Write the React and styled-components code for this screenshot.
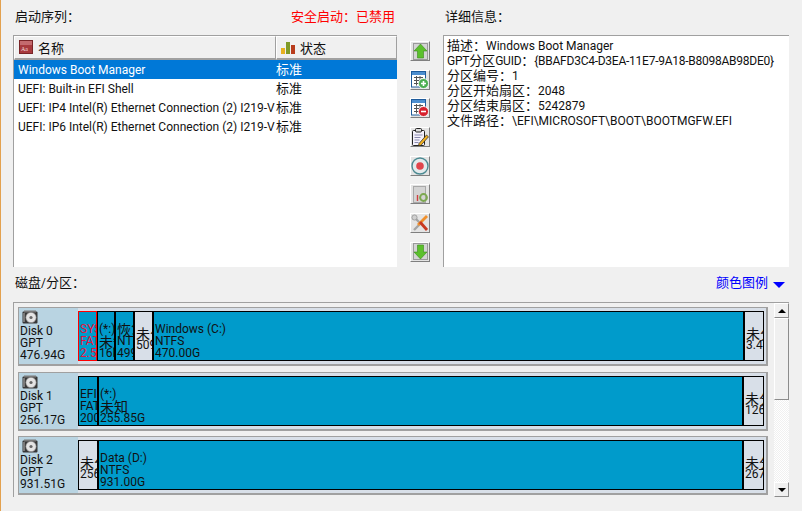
import React from 'react';
import styled, { createGlobalStyle } from 'styled-components';

const GlobalStyle = createGlobalStyle`
  html, body {
    margin: 0;
    padding: 0;
    background: #f0f0f0;
  }
  * {
    box-sizing: border-box;
  }
`;

const Page = styled.div`
  width: 802px;
  height: 511px;
  overflow: hidden;
  background: #f0f0f0;
  border-left: 1px solid #e3a14f;
  color: #111;
  font-family: Roboto, 'Noto Sans CJK SC', sans-serif;
  font-size: 12px;
  display: flex;
  flex-direction: column;
`;

const Cjk = styled.span`
  font-family: 'Noto Sans CJK SC', sans-serif;
  font-size: 13px;
  line-height: 1;
  letter-spacing: 0;
`;

const Top = styled.div`
  display: flex;
  height: 267px;
  padding: 9px 13px 0 12px;
`;

const LeftCol = styled.div`
  width: 384px;
  display: flex;
  flex-direction: column;
`;

const LabelRow = styled.div`
  height: 17px;
  margin-bottom: 9px;
  display: flex;
  justify-content: space-between;
  align-items: center;
  line-height: 17px;
  padding-left: 2px;
`;

const SecureText = styled.span`
  color: #f00;
  width: 106px;
  white-space: nowrap;
`;

const ListBox = styled.div`
  flex: 1;
  background: #fff;
  border-top: 1px solid #a0a0a0;
  border-left: 1px solid #a0a0a0;
`;

const HeaderRow = styled.div`
  display: flex;
  height: 24px;
`;

const HeaderCell = styled.div`
  width: ${(p) => p.$width}px;
  background: #f0f0f0;
  border-top: 1px solid #fff;
  border-left: 1px solid #fff;
  border-right: 1px solid #a0a0a0;
  border-bottom: 2px solid #a0a0a0;
  display: flex;
  align-items: center;
  gap: 5px;
  padding: 0 0 1px 4px;
  line-height: 19px;
`;

const Row = styled.div`
  height: 19px;
  line-height: 19px;
  padding-top: 1px;
  display: flex;
  align-items: center;
  background: ${(p) => (p.$selected ? '#0078d7' : '#fff')};
  color: ${(p) => (p.$selected ? '#fff' : '#111')};
`;

const NameCell = styled.div`
  width: 262px;
  padding-left: 4px;
  white-space: nowrap;
  overflow: hidden;
`;

const StateCell = styled.div`
  padding-left: 0;
`;

const Toolbar = styled.div`
  width: 46px;
  flex-shrink: 0;
  padding: 32px 0 0 13px;
  display: flex;
  flex-direction: column;
  gap: 8.7px;
`;

const ToolButton = styled.div`
  width: 20px;
  height: 20px;
  background: #e4e4e4;
  border-top: 1px solid #fff;
  border-left: 1px solid #fff;
  border-right: 1px solid #7f7f7f;
  border-bottom: 1px solid #7f7f7f;
  display: flex;
  align-items: center;
  justify-content: center;
`;

const RightCol = styled.div`
  flex: 1;
  display: flex;
  flex-direction: column;
`;

const DetailBox = styled.div`
  flex: 1;
  background: #fff;
  border-top: 1px solid #a0a0a0;
  border-left: 1px solid #a0a0a0;
  padding: 2px 3px;
  white-space: nowrap;
`;

const DetailLine = styled.div`
  height: 15px;
  line-height: 15px;
  letter-spacing: ${(p) => (p.$tight ? '-0.25px' : '0')};
`;

const DiskSection = styled.div`
  flex: 1;
  display: flex;
  flex-direction: column;
  padding: 8px 13px 0 12px;
`;

const DiskHeader = styled(LabelRow)`
  margin-bottom: 10px;
`;

const LegendLink = styled.span`
  display: flex;
  align-items: center;
  gap: 5px;
  color: #0000ff;
  padding-right: 4px;
`;

const LegendArrow = styled.span`
  width: 0;
  height: 0;
  border-left: 6px solid transparent;
  border-right: 6px solid transparent;
  border-top: 6px solid #0000ff;
  margin-top: 2px;
`;

const DiskPanel = styled.div`
  height: 195px;
  display: flex;
  border-top: 1px solid #a0a0a0;
  border-left: 1px solid #a0a0a0;
`;

const DiskList = styled.div`
  flex: 1;
  padding: 4px 6px 0 4px;
  display: flex;
  flex-direction: column;
  gap: 5.5px;
`;

const DiskRow = styled.div`
  height: 59px;
  display: flex;
  background: #d8dfe8;
  border-style: solid;
  border-color: #a0a0a0;
  border-width: 1px 2px 2px 1px;
`;

const DiskInfo = styled.div`
  width: 59px;
  background: #b9d4e2;
  padding: 2px 0 0 1px;
  line-height: 12px;
  flex-shrink: 0;
`;

const DiskIconWrap = styled.div`
  height: 15px;
  padding-left: 2px;
`;

const PartitionRow = styled.div`
  flex: 1;
  display: flex;
  padding: 3px 2px 3px 0;
`;

const Partition = styled.div`
  width: ${(p) => p.$width}px;
  flex: ${(p) => (p.$grow ? 1 : 'none')};
  background: ${(p) => (p.$free ? '#d8dfe8' : '#009bcb')};
  border: 1px solid ${(p) => (p.$active ? '#f00' : '#000')};
  color: ${(p) => (p.$active ? '#e8123a' : '#111')};
  display: flex;
  flex-direction: column;
  justify-content: center;
  padding: ${(p) => (p.$free ? 6 : 10)}px 0 0 1px;
  overflow: hidden;
  white-space: nowrap;
`;

const PartLine = styled.div`
  height: 12px;
  line-height: 12px;
  display: flex;
  align-items: center;
  ${Cjk} {
    font-size: 14px;
  }
`;

const ScrollBar = styled.div`
  width: 15px;
  display: flex;
  flex-direction: column;
  background: repeating-conic-gradient(#f0f0f0 0 25%, #fff 0 50%) 0 0 / 2px 2px;
`;

const ScrollButton = styled.div`
  height: 15px;
  background: #f0f0f0;
  border: 1px solid #fff;
  border-right-color: #8c8c8c;
  border-bottom-color: #8c8c8c;
  display: flex;
  align-items: center;
  justify-content: center;
`;

const ScrollThumb = styled(ScrollButton)`
  height: 82px;
`;

const ScrollSpace = styled.div`
  flex: 1;
`;

const ScrollArrow = styled.span`
  width: 0;
  height: 0;
  border-left: 4px solid transparent;
  border-right: 4px solid transparent;
  ${(p) => (p.$up ? 'border-bottom: 4px solid #000;' : 'border-top: 4px solid #000;')}
`;

// the reference draws CJK a size larger than latin, so split by script
function Mixed({ text }) {
  return text
    .split(/([\u3000-\u9fff\uff00-\uffef]+)/)
    .map((s, i) => (i % 2 ? <Cjk key={i}>{s}</Cjk> : s));
}

function NameIcon() {
  return (
    <svg width="14" height="14" viewBox="0 0 14 14">
      <rect x="0.5" y="0.5" width="13" height="13" fill="#a83a3e" stroke="#7a2528" />
      <rect x="1" y="1" width="12" height="4" fill="#c46a6e" />
      <text x="2" y="11" fontSize="6" fill="#f4dcdc" fontFamily="Liberation Serif, serif">Aa</text>
    </svg>
  );
}

function StateIcon() {
  return (
    <svg width="14" height="14" viewBox="0 0 14 14">
      <rect x="0" y="8" width="4" height="6" fill="#e8b020" />
      <rect x="5" y="2" width="4" height="12" fill="#7f9a28" />
      <rect x="10" y="5" width="4" height="9" fill="#b83c1c" />
    </svg>
  );
}

function ArrowIcon({ down }) {
  return (
    <svg width="17" height="17" viewBox="0 0 17 17">
      <rect x="1.5" y="0.5" width="14" height="16" fill="#d4d4d4" stroke="#9a9a9a" />
      <path
        d={down ? 'M5.5 2h6v7h3.5l-6.5 7-6.5-7h3.5z' : 'M8.5 1l6.5 7h-3.5v7h-6V8H2z'}
        fill="#5cc02c"
        stroke="#3a8a1c"
        strokeWidth="0.6"
      />
    </svg>
  );
}

function TableIcon({ color, sign }) {
  return (
    <svg width="18" height="18" viewBox="0 0 18 18">
      <rect x="0.5" y="0.5" width="14" height="15.5" fill="#fff" stroke="#1f5c9c" />
      <rect x="1" y="1" width="13" height="3" fill="#4d8fd0" />
      <path d="M3 6.5h9M3 9.5h9M3 12.5h9M5.5 5v9.5M9 5v9.5" stroke="#555" strokeWidth="1" />
      <circle cx="12.5" cy="12.5" r="5" fill={color} stroke="#fff" strokeWidth="0.8" />
      <path d={sign === 'plus' ? 'M10 12.5h5M12.5 10v5' : 'M10 12.5h5'} stroke="#fff" strokeWidth="1.6" />
    </svg>
  );
}

function ClipboardIcon() {
  return (
    <svg width="18" height="18" viewBox="0 0 18 18">
      <rect x="1.5" y="2.5" width="12" height="15" rx="1" fill="#f4f2fc" stroke="#222" />
      <rect x="4.5" y="0.5" width="6" height="3.5" rx="1" fill="#ddd" stroke="#222" />
      <path d="M3.5 7h8M3.5 9.5h6M3.5 12h5M3.5 14.5h4" stroke="#8a8ab0" />
      <path d="M8 15.5l7.5-8.5 2 1.8-7.5 8.5-2.5.6z" fill="#f0b020" stroke="#222" strokeWidth="0.7" />
    </svg>
  );
}

function RecordIcon() {
  return (
    <svg width="18" height="18" viewBox="0 0 18 18">
      <circle cx="9" cy="9" r="8" fill="#e4eaec" stroke="#4b8a92" strokeWidth="1.4" />
      <circle cx="9" cy="9" r="3.8" fill="#e0454c" />
    </svg>
  );
}

function OrderIcon() {
  return (
    <svg width="17" height="17" viewBox="0 0 17 17">
      <rect x="1.5" y="0.5" width="12" height="16" fill="#d4d4d4" stroke="#a8a8a8" />
      <path d="M5.5 9v6" stroke="#d04040" strokeWidth="1.4" />
      <circle cx="11.5" cy="11.5" r="3.4" fill="none" stroke="#7ca850" strokeWidth="2" />
    </svg>
  );
}

function ToolsIcon() {
  return (
    <svg width="18" height="18" viewBox="0 0 18 18">
      <path d="M4 4l6 6M3 16l7-7" stroke="#a4a4a4" strokeWidth="2.4" />
      <circle cx="3.5" cy="3.5" r="2.6" fill="#d0d0d0" stroke="#8c8c8c" strokeWidth="0.7" />
      <path d="M16 2L7 11" stroke="#f0902c" strokeWidth="2.8" />
      <path d="M9 8l7 8" stroke="#c83820" strokeWidth="2.8" />
    </svg>
  );
}

function DiskIcon() {
  return (
    <svg width="16" height="14" viewBox="0 0 16 14">
      <rect x="0.5" y="1.5" width="15" height="12" rx="1" fill="#383838" />
      <rect x="2" y="0.5" width="12" height="2" fill="#7a7a7a" />
      <circle cx="9" cy="7.5" r="5.2" fill="#e4e4e4" stroke="#777" strokeWidth="0.6" />
      <circle cx="9" cy="7.5" r="1.6" fill="#666" />
      <path d="M2 3v9" stroke="#bbb" />
    </svg>
  );
}

const bootRows = [
  'Windows Boot Manager',
  'UEFI: Built-in EFI Shell',
  'UEFI: IP4 Intel(R) Ethernet Connection (2) I219-V',
  'UEFI: IP6 Intel(R) Ethernet Connection (2) I219-V',
];

const details = [
  '描述：Windows Boot Manager',
  'GPT分区GUID：{BBAFD3C4-D3EA-11E7-9A18-B8098AB98DE0}',
  '分区编号：1',
  '分区开始扇区：2048',
  '分区结束扇区：5242879',
  '文件路径：\\EFI\\MICROSOFT\\BOOT\\BOOTMGFW.EFI',
];

const disks = [
  {
    name: 'Disk 0',
    type: 'GPT',
    size: '476.94G',
    parts: [
      { width: 19, lines: ['SYSTEM', 'FAT32', '2.50G'], active: true },
      { width: 18, lines: ['(*:)', '未知', '16M'] },
      { width: 19, lines: ['恢复', 'NTFS', '499M'] },
      { width: 19, lines: ['未分配', '509M'], free: true },
      { grow: true, lines: ['Windows (C:)', 'NTFS', '470.00G'] },
      { width: 20, lines: ['未分配', '3.4M'], free: true },
    ],
  },
  {
    name: 'Disk 1',
    type: 'GPT',
    size: '256.17G',
    parts: [
      { width: 20, lines: ['EFI', 'FAT32', '200M'] },
      { grow: true, lines: ['(*:)', '未知', '255.85G'] },
      { width: 21, lines: ['未分配', '126M'], free: true },
    ],
  },
  {
    name: 'Disk 2',
    type: 'GPT',
    size: '931.51G',
    parts: [
      { width: 20, lines: ['未分配', '256M'], free: true },
      { grow: true, lines: ['Data (D:)', 'NTFS', '931.00G'] },
      { width: 21, lines: ['未分配', '267M'], free: true },
    ],
  },
];

function App() {
  return (
    <Page>
      <GlobalStyle />
      <Top>
        <LeftCol>
          <LabelRow>
            <span><Mixed text="启动序列：" /></span>
            <SecureText><Mixed text="安全启动：已禁用" /></SecureText>
          </LabelRow>
          <ListBox>
            <HeaderRow>
              <HeaderCell $width={262}>
                <NameIcon />
                <Mixed text="名称" />
              </HeaderCell>
              <HeaderCell $width={121}>
                <StateIcon />
                <Mixed text="状态" />
              </HeaderCell>
            </HeaderRow>
            {bootRows.map((v, i) => (
              <Row key={v} $selected={i === 0}>
                <NameCell>{v}</NameCell>
                <StateCell><Mixed text="标准" /></StateCell>
              </Row>
            ))}
          </ListBox>
        </LeftCol>
        <Toolbar>
          <ToolButton><ArrowIcon /></ToolButton>
          <ToolButton><TableIcon color="#4cae50" sign="plus" /></ToolButton>
          <ToolButton><TableIcon color="#d8202c" sign="minus" /></ToolButton>
          <ToolButton><ClipboardIcon /></ToolButton>
          <ToolButton><RecordIcon /></ToolButton>
          <ToolButton><OrderIcon /></ToolButton>
          <ToolButton><ToolsIcon /></ToolButton>
          <ToolButton><ArrowIcon down /></ToolButton>
        </Toolbar>
        <RightCol>
          <LabelRow>
            <span><Mixed text="详细信息：" /></span>
          </LabelRow>
          <DetailBox>
            {details.map((v, i) => (
              <DetailLine key={v} $tight={i === 1}><Mixed text={v} /></DetailLine>
            ))}
          </DetailBox>
        </RightCol>
      </Top>
      <DiskSection>
        <DiskHeader>
          <span><Mixed text="磁盘/分区：" /></span>
          <LegendLink>
            <span><Mixed text="颜色图例" /></span>
            <LegendArrow />
          </LegendLink>
        </DiskHeader>
        <DiskPanel>
          <DiskList>
            {disks.map((d) => (
              <DiskRow key={d.name}>
                <DiskInfo>
                  <DiskIconWrap><DiskIcon /></DiskIconWrap>
                  <div>{d.name}</div>
                  <div>{d.type}</div>
                  <div>{d.size}</div>
                </DiskInfo>
                <PartitionRow>
                  {d.parts.map((p, i) => (
                    <Partition
                      key={i}
                      $width={p.width}
                      $grow={p.grow}
                      $free={p.free}
                      $active={p.active}
                    >
                      {p.lines.map((l, j) => (
                        <PartLine key={j}><Mixed text={l} /></PartLine>
                      ))}
                    </Partition>
                  ))}
                </PartitionRow>
              </DiskRow>
            ))}
          </DiskList>
          <ScrollBar>
            <ScrollButton><ScrollArrow $up /></ScrollButton>
            <ScrollThumb />
            <ScrollSpace />
            <ScrollButton><ScrollArrow /></ScrollButton>
          </ScrollBar>
        </DiskPanel>
      </DiskSection>
    </Page>
  );
}

export default App;
